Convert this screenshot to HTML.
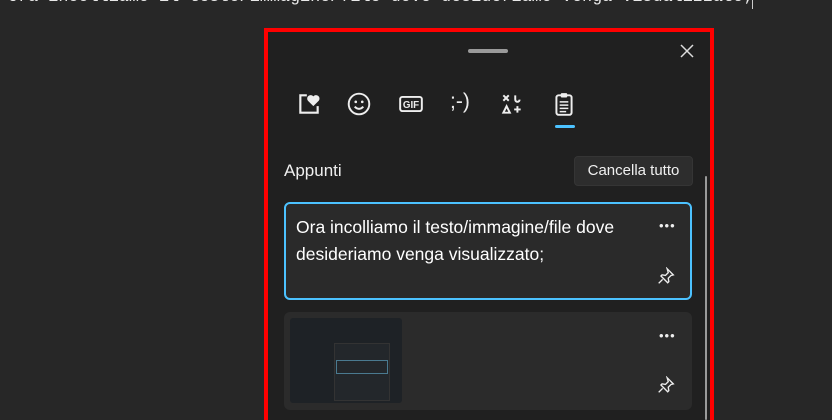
<!DOCTYPE html>
<html style="width:832px;height:420px;overflow:hidden"><head><meta charset="utf-8"><style>
*{margin:0;padding:0;box-sizing:border-box}
body{width:832px;height:420px;background:#272727;overflow:hidden;position:relative;font-family:"Segoe UI","Liberation Sans",sans-serif;color:#fff}
.code{position:absolute;left:8px;top:-12px;font:16.8px "Liberation Mono",monospace;color:#e8e8e8;white-space:pre}
.caret{position:absolute;left:752px;top:0;width:1px;height:9px;background:#ccc}
.red{position:absolute;left:264px;top:28px;width:450px;height:396px;border:4px solid #f00;border-bottom:none;background:#202020}
.a{position:absolute}
.card{position:absolute;left:284px;width:408px;border-radius:6px;background:#2b2b2b}
.ico{position:absolute;top:91px;width:26px;height:26px}
</style></head><body>
<div class="code">Ora incolliamo il testo/immagine/file dove desideriamo venga visualizzato;</div>
<div class="caret"></div>
<div class="red"></div>
<div class="a" style="left:468px;top:49px;width:40px;height:4px;border-radius:2px;background:#9a9a9a"></div>
<svg class="a" style="left:679px;top:43px" width="16" height="16"><path d="M2 2L14 14M14 2L2 14" stroke="#ddd" stroke-width="1.5"/></svg>
<svg class="ico" style="left:296px" viewBox="0 0 24 24"><path d="M10 4H4v16h16v-6" fill="none" stroke="#eee" stroke-width="2"/><path d="M16 14l-5-5a3 3 0 0 1 5-4a3 3 0 0 1 5 4z" fill="#eee"/></svg>
<svg class="ico" style="left:346px" viewBox="0 0 24 24"><circle cx="12" cy="12" r="9.5" fill="none" stroke="#eee" stroke-width="1.8"/><circle cx="9" cy="10" r="1.2" fill="#eee"/><circle cx="15" cy="10" r="1.2" fill="#eee"/><path d="M8 14.5q4 4 8 0" fill="none" stroke="#eee" stroke-width="1.8"/></svg>
<svg class="ico" style="left:398px" viewBox="0 0 24 24"><rect x="2" y="5.5" width="20" height="13" rx="2" fill="none" stroke="#eee" stroke-width="1.8"/><text x="12" y="15.8" font-size="9" font-weight="bold" text-anchor="middle" fill="#eee" font-family="Liberation Sans">GIF</text></svg>
<div class="a" style="left:450px;top:90px;font-size:21px;color:#eee;font-family:'Liberation Sans'">;-)</div>
<svg class="ico" style="left:499px" viewBox="0 0 24 24"><path d="M4 4l5 5M9 4l-5 5M15 4v4a2 2 0 0 0 4 0M4 20l3-6 3 6zM17 14v6M14 17h6" fill="none" stroke="#eee" stroke-width="1.8"/></svg>
<svg class="ico" style="left:551px" viewBox="0 0 24 24"><rect x="5" y="4" width="14" height="18" rx="2" fill="none" stroke="#eee" stroke-width="1.8"/><rect x="9" y="2" width="6" height="4" rx="1" fill="#eee"/><path d="M8 10h8M8 13h8M8 16h8M8 19h6" stroke="#eee" stroke-width="1.4"/></svg>
<div class="a" style="left:555px;top:125px;width:20px;height:3px;border-radius:2px;background:#4cc2ff"></div>
<div class="a" style="left:284px;top:161px;font-size:17px;color:#f0f0f0">Appunti</div>
<div class="a" style="left:574px;top:156px;width:119px;height:30px;border-radius:4px;background:#2d2d2d;border:1px solid #353535;font-size:15px;line-height:28px;text-align:center;color:#f0f0f0">Cancella tutto</div>
<div class="a" style="left:705px;top:176px;width:2px;height:244px;background:#9a9a9a;border-radius:1px"></div>
<div class="card" style="top:202px;height:98px;border:2px solid #4cc2ff;background:#2a2a2a"></div>
<div class="a" style="left:296px;top:214px;font-size:17.5px;line-height:27px;color:#fff;width:370px">Ora incolliamo il testo/immagine/file dove desideriamo venga visualizzato;</div>
<div class="a" style="left:659px;top:218px;font-size:13px;letter-spacing:1px;color:#eee">•••</div>
<svg class="a" style="left:657px;top:267px" width="18" height="18" viewBox="0 0 16 16"><path d="M9 1.5l5.5 5.5-2 .5-2.5 2.5.5 3-1 1-6-6 1-1 3 .5 2.5-2.5zM5 11l-3.5 3.5" fill="none" stroke="#eee" stroke-width="1.2"/></svg>
<div class="card" style="top:312px;height:98px"></div>
<div class="a" style="left:290px;top:318px;width:112px;height:85px;background:#1e2226;border-radius:3px"><div style="position:absolute;left:44px;top:25px;width:56px;height:58px;background:#23272b;border:1px solid #333"></div><div style="position:absolute;left:46px;top:42px;width:52px;height:14px;border:1px solid #4a7a90"></div></div>
<div class="a" style="left:659px;top:328px;font-size:13px;letter-spacing:1px;color:#eee">•••</div>
<svg class="a" style="left:657px;top:376px" width="18" height="18" viewBox="0 0 16 16"><path d="M9 1.5l5.5 5.5-2 .5-2.5 2.5.5 3-1 1-6-6 1-1 3 .5 2.5-2.5zM5 11l-3.5 3.5" fill="none" stroke="#eee" stroke-width="1.2"/></svg>
</body></html>
